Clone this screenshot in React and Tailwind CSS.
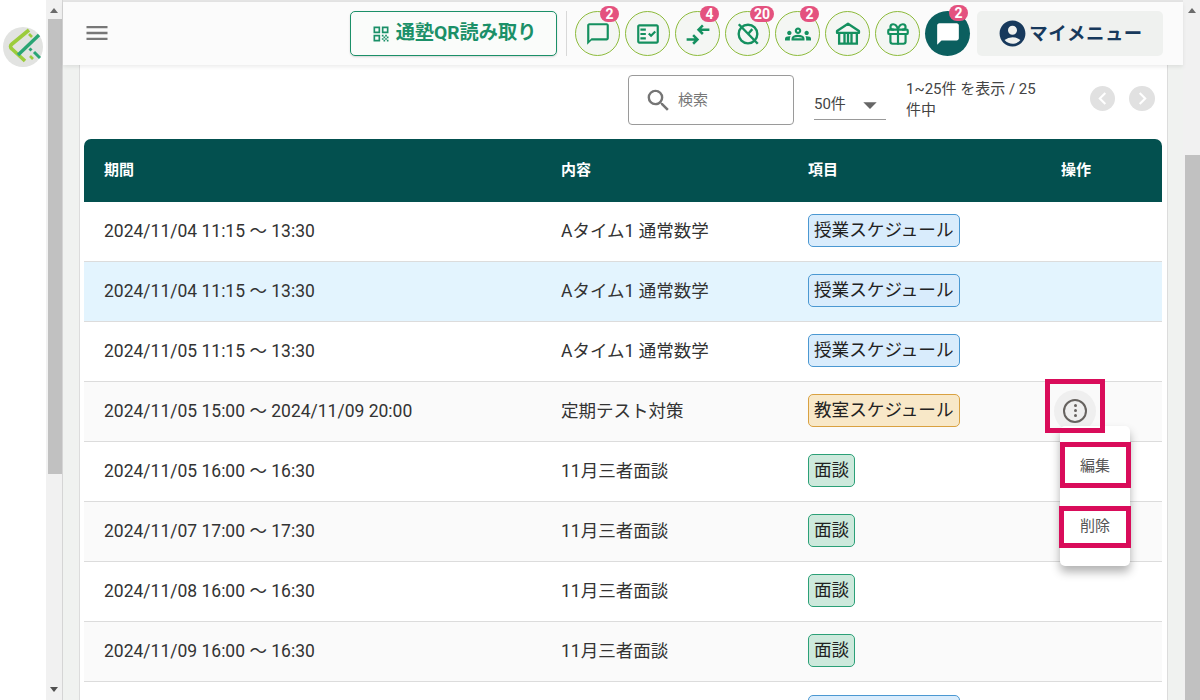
import React from "react";
import {
  MdQrCode, MdChatBubbleOutline, MdOutlineFactCheck, MdOutlineGroups,
  MdChatBubble, MdAccountCircle, MdSearch, MdArrowDropDown, MdChevronLeft, MdChevronRight, MdMenu,
} from "react-icons/md";
import { Gift } from "lucide-react";

const font = "font-['Roboto','Noto_Sans_CJK_JP',sans-serif]";

function ArrowsIn({ className }) {
  return (
    <svg viewBox="0 0 24 24" className={className} fill="none" stroke="currentColor" strokeWidth="2.3">
      <path d="M1.5 17h9.5M7.5 13l4 4-4 4" />
      <path d="M22.5 8h-9.5M16.5 4l-4 4 4 4" />
    </svg>
  );
}

function TimerOff({ className }) {
  return (
    <svg viewBox="0 0 24 24" className={className} fill="none" stroke="currentColor" strokeWidth="2.2">
      <circle cx="12" cy="12" r="8.6" />
      <path d="M3.5 3 21 21" />
      <path d="M12.5 11.5 16 7.5" />
    </svg>
  );
}

function Museum({ className }) {
  return (
    <svg viewBox="0 0 24 24" className={className} fill="none" stroke="currentColor" strokeWidth="2">
      <path d="M12 3.2 2.6 9.4V11h18.8V9.4z" strokeLinejoin="round" />
      <path d="M4.4 11v9.2h15.2V11" />
      <path d="M9 11v9.2M12 11v9.2M15 11v9.2" />
    </svg>
  );
}

function Logo() {
  return (
    <div className="w-10 h-10 rounded-full bg-[#e2e3e1] flex items-center justify-center">
      <svg viewBox="0 0 40 40" className="w-10 h-10" fill="none">
        <path d="M26 3 L9 17 Q6 19.5 9 22 L22 34" stroke="#9ccc3c" strokeWidth="3.6" />
        <path d="M15 28 L36 8" stroke="#2aa574" strokeWidth="3.4" />
        <path d="M31 25 L37 31" stroke="#2aa574" strokeWidth="3" />
        <path d="M26.5 21.5 L28.5 23.5" stroke="#2aa574" strokeWidth="3" />
        <path d="M26 7 L29 10" stroke="#9ccc3c" strokeWidth="2.6" />
        <path d="M27 29 L30 32" stroke="#9ccc3c" strokeWidth="2.6" />
      </svg>
    </div>
  );
}

function Scrollbar({ thumbTop, thumbH, className }) {
  return (
    <div className={`relative h-full bg-[#f1f1f1] flex flex-col items-center justify-between py-[8px] ${className}`}>
      <div className="w-0 h-0 border-x-[4px] border-x-transparent border-b-[5px] border-b-[#6b6b6b]" />
      <div className="w-0 h-0 border-x-[4px] border-x-transparent border-t-[5px] border-t-[#505050]" />
      <div className="absolute left-[2px] right-0 bg-[#c1c1c1]" style={{ top: thumbTop, height: thumbH }} />
    </div>
  );
}

function Circle({ Icon, badge, dark, size = "w-[26px] h-[26px]" }) {
  return (
    <div
      className={`relative w-[45px] h-[45px] rounded-full flex items-center justify-center ${
        dark ? "bg-[#0b5f5f] text-white" : "border-[1.5px] border-[#8dbb3b] bg-[#f4f6f3] text-[#14905f]"
      }`}
    >
      <Icon className={size} />
      {badge && (
        <span className="absolute top-[-6px] left-[24px] min-w-[19px] h-[16px] px-[4px] rounded-full bg-[#e4527f] text-white text-[14px] leading-[16px] font-bold text-center">
          {badge}
        </span>
      )}
    </div>
  );
}

function Badge({ kind, children, empty }) {
  const cls = {
    blue: "bg-[#d9ecfc] border-[#4b98d2]",
    orange: "bg-[#f8e8c8] border-[#d9a141]",
    green: "bg-[#cde9dc] border-[#2ba077]",
  }[kind];
  return (
    <span className={`block h-[33px] leading-[31px] px-[5px] mb-[2px] rounded-[5px] border text-[17.6px] text-[#222] ${empty ? "w-[152px]" : ""} ${cls}`}>
      {children}
    </span>
  );
}

const rows = [
  ["2024/11/04 11:15 〜 13:30", "Aタイム1 通常数学", "授業スケジュール", "blue", "bg-white"],
  ["2024/11/04 11:15 〜 13:30", "Aタイム1 通常数学", "授業スケジュール", "blue", "bg-[#e3f4fe]"],
  ["2024/11/05 11:15 〜 13:30", "Aタイム1 通常数学", "授業スケジュール", "blue", "bg-white"],
  ["2024/11/05 15:00 〜 2024/11/09 20:00", "定期テスト対策", "教室スケジュール", "orange", "bg-[#fafafa]", true],
  ["2024/11/05 16:00 〜 16:30", "11月三者面談", "面談", "green", "bg-white"],
  ["2024/11/07 17:00 〜 17:30", "11月三者面談", "面談", "green", "bg-[#fafafa]"],
  ["2024/11/08 16:00 〜 16:30", "11月三者面談", "面談", "green", "bg-white"],
  ["2024/11/09 16:00 〜 16:30", "11月三者面談", "面談", "green", "bg-[#fafafa]"],
];

const cols = "grid grid-cols-[457px_247px_253px_101px] items-center";

export default function App() {
  return (
    <div className={`${font} w-[1200px] h-[700px] overflow-hidden flex bg-white text-[#333]`}>
      <aside className="w-[46px] h-full shrink-0 bg-white pt-[27px] pl-[3px]">
        <Logo />
      </aside>
      <Scrollbar thumbTop={19} thumbH={455} className="border-r border-r-[#d5d5d5] w-[17px]" />
      <div className="flex-1 min-w-0 h-full flex flex-col border-t-2 border-t-[#e4e4e4] bg-[#f0f2f0] relative">
        <header className="relative z-10 h-[63px] shrink-0 bg-[#fbfbfb] shadow-[0_2px_4px_rgba(0,0,0,0.08)] flex items-center pl-[20px] pr-[20px]">
          <MdMenu className="w-[28px] h-[28px] text-[#777] mr-auto -mt-[2px]" />
          <div className="h-[45px] w-[207px] rounded-[5px] border border-[#1b9068] bg-[#fafcfa] shadow-[0_1px_2px_rgba(0,0,0,0.15)] flex items-center justify-center gap-[5px] text-[#1b9068] font-bold text-[19.2px]">
            <MdQrCode className="w-[20px] h-[20px]" />
            <span>通塾QR読み取り</span>
          </div>
          <div className="w-px h-[45px] bg-[#d8d8d8] ml-[9px] mr-[8px]" />
          <div className="flex gap-[5px]">
            <Circle Icon={MdChatBubbleOutline} badge="2" />
            <Circle Icon={MdOutlineFactCheck} />
            <Circle Icon={ArrowsIn} badge="4" />
            <Circle Icon={TimerOff} badge="20" />
            <Circle Icon={MdOutlineGroups} badge="2" />
            <Circle Icon={Museum} size="w-[28px] h-[28px]" />
            <Circle Icon={Gift} size="w-[26px] h-[26px]" />
            <Circle Icon={MdChatBubble} badge="2" dark />
          </div>
          <div className="ml-[7px] w-[186px] h-[45px] rounded-[5px] bg-[#eff1ef] flex items-center justify-center text-[#17395c] font-bold text-[18.4px] tracking-[0.5px]">
            <MdAccountCircle className="w-[31px] h-[31px] mr-[1px]" />
            <span>マイメニュー</span>
          </div>
        </header>
        <div className="flex-1 min-h-0 flex pl-[16px] pr-[15px]">
          <main className="relative flex-1 min-w-0 bg-white border-x border-x-[#dcdcdc] pl-[4px] overflow-hidden">
            <div className="h-[74px] flex items-start text-[15px] text-[#444]">
              <div className="ml-[544px] mt-[10px] w-[166px] h-[50px] rounded-[4px] border border-[#9a9a9a] flex items-center pl-[15px] text-[15px] text-[#777]">
                <MdSearch className="w-[29px] h-[29px] text-[#757575] mr-[5px]" />
                <span>検索</span>
              </div>
              <div className="ml-[20px] mt-[13px] w-[72px] h-[42px] border-b border-b-[#999] flex items-center justify-between pt-[12px] text-[15px]">
                <span>50件</span>
                <MdArrowDropDown className="w-[32px] h-[32px] text-[#666]" />
              </div>
              <div className="ml-[20px] mt-[14px] w-[135px] leading-[21px] text-[15px]">1~25件 を表示 / 25 件中</div>
              <div className="ml-[49px] mt-[21px] flex gap-[14px]">
                <span className="w-[25px] h-[25px] rounded-full bg-[#e1e1e1] text-white flex items-center justify-center">
                  <MdChevronLeft className="w-[25px] h-[25px]" />
                </span>
                <span className="w-[26px] h-[25px] rounded-full bg-[#e1e1e1] text-white flex items-center justify-center">
                  <MdChevronRight className="w-[25px] h-[25px]" />
                </span>
              </div>
            </div>
            <div className="w-[1078px]">
              <div className={`${cols} h-[63px] bg-[#03504f] rounded-t-[7px] text-white text-[15px] font-bold pl-[20px]`}>
                <span>期間</span>
                <span>内容</span>
                <span>項目</span>
                <span>操作</span>
              </div>
              {rows.map((r, i) => (
                <div key={i} className={`${cols} h-[60px] border-b border-b-[#dcdcdc] pl-[20px] text-[17.5px] text-[#333] ${r[4]}`}>
                  <span>{r[0]}</span>
                  <span>{r[1]}</span>
                  <span className="flex"><Badge kind={r[3]}>{r[2]}</Badge></span>
                  <span className="flex">
                    {r[5] && (
                      <span className="ml-[-7px] mb-[2px] w-[42px] h-[42px] rounded-full bg-[#efefef] flex items-center justify-center">
                        <span className="w-[24px] h-[24px] rounded-full border-2 border-[#66625f] flex flex-col items-center justify-center gap-[2px]">
                          <i className="block w-[3px] h-[3px] rounded-full bg-[#66625f]" />
                          <i className="block w-[3px] h-[3px] rounded-full bg-[#66625f]" />
                          <i className="block w-[3px] h-[3px] rounded-full bg-[#66625f]" />
                        </span>
                      </span>
                    )}
                  </span>
                </div>
              ))}
              <div className={`${cols} h-[60px] pl-[20px] bg-white`}>
                <span />
                <span />
                <span className="flex"><Badge kind="blue" empty /></span>
              </div>
            </div>

            {/* overlay: popup menu */}
            <div className="absolute left-[980px] top-[361px] w-[70px] h-[140px] bg-white rounded-[5px] shadow-[0_6px_10px_rgba(0,0,0,0.3)] flex flex-col items-center pt-[29px] gap-[38px] text-[15px] leading-[22px] text-[#555] z-20">
              <span>編集</span>
              <span>削除</span>
            </div>
            {/* overlay: annotation frames */}
            <div className="absolute left-[965px] top-[314px] w-[60px] h-[54px] border-[5px] border-[#d90c5a] z-30" />
            <div className="absolute left-[980px] top-[377px] w-[71px] h-[46px] border-[5px] border-[#d90c5a] z-30" />
            <div className="absolute left-[979px] top-[441px] w-[72px] h-[42px] border-[5px] border-[#d90c5a] z-30" />
          </main>
        </div>
      </div>
      <Scrollbar thumbTop={155} thumbH={545} className="w-[17px]" />
    </div>
  );
}
